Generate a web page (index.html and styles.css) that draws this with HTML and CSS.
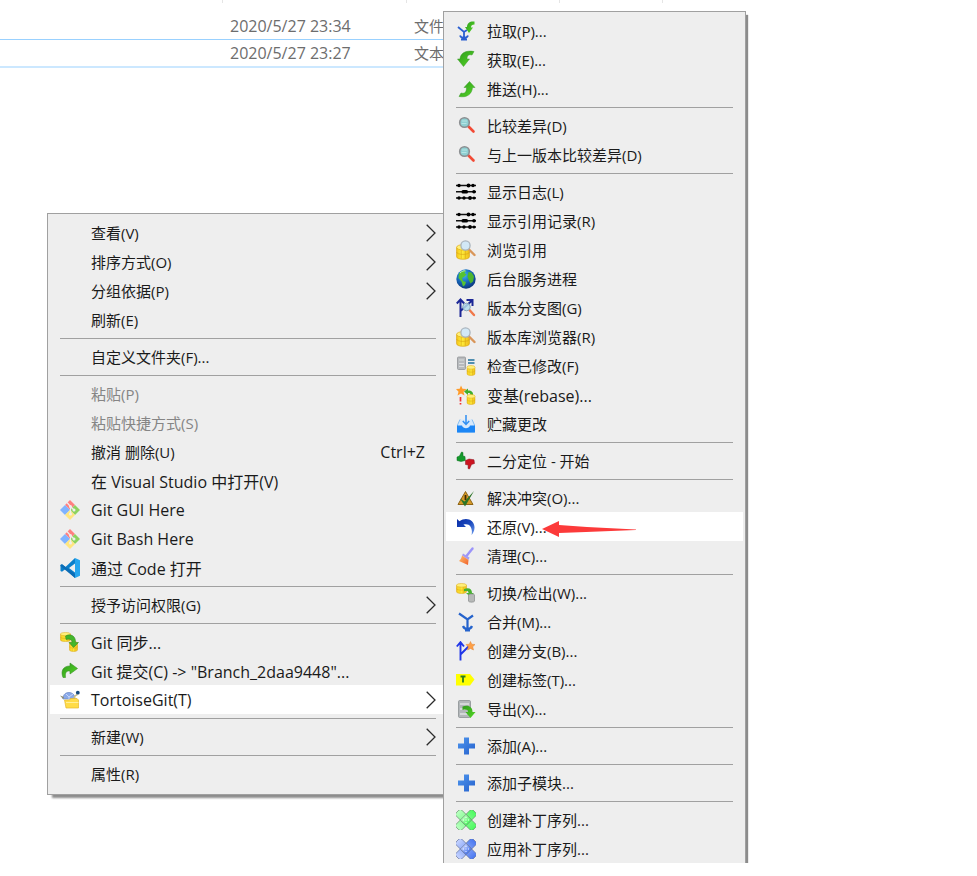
FILE: index.html
```html
<!DOCTYPE html>
<html lang="zh-CN">
<head>
  <meta charset="UTF-8">
  <title>TortoiseGit</title>
  <link rel="stylesheet" href="styles.css">
</head>
<body>
  <!-- Icon set -->
  <svg class="defs" aria-hidden="true">
    <defs>
      <linearGradient id="green" x1="0" y1="0" x2="1" y2="1">
        <stop offset="0" stop-color="#2f9a1c"/><stop offset="1" stop-color="#55d826"/>
      </linearGradient>
      <linearGradient id="gold" x1="0" y1="0" x2="1" y2="0">
        <stop offset="0" stop-color="#f5c518"/><stop offset=".4" stop-color="#ffee3c"/><stop offset="1" stop-color="#eebc1a"/>
      </linearGradient>
      <radialGradient id="sea" cx=".4" cy=".3" r=".8">
        <stop offset="0" stop-color="#3fb8f2"/><stop offset=".5" stop-color="#1565b8"/><stop offset="1" stop-color="#0a2a6c"/>
      </radialGradient>
      <linearGradient id="plusBlue" x1="0" y1="0" x2="1" y2="1">
        <stop offset="0" stop-color="#4f97ee"/><stop offset="1" stop-color="#2560cc"/>
      </linearGradient>
      <linearGradient id="patchGreen" x1="0" y1="0" x2="1" y2="0">
        <stop offset="0" stop-color="#b9ffc0"/><stop offset="1" stop-color="#4dfa60"/>
      </linearGradient>
      <linearGradient id="patchBlue" x1="0" y1="0" x2="1" y2="0">
        <stop offset="0" stop-color="#c4d2ff"/><stop offset="1" stop-color="#4a78f0"/>
      </linearGradient>
      <linearGradient id="undo" x1="0" y1="0" x2="1" y2="1">
        <stop offset="0" stop-color="#0a2ea8"/><stop offset=".5" stop-color="#1a48bc"/><stop offset="1" stop-color="#6f9ff0"/>
      </linearGradient>
      <linearGradient id="broom" x1="0" y1="0" x2="1" y2="1">
        <stop offset="0" stop-color="#ffc06a"/><stop offset="1" stop-color="#f0602c"/>
      </linearGradient>

      <symbol id="db" viewBox="0 0 12 12" preserveAspectRatio="none">
        <path d="M.5 2.500v7c0 2.600 11 2.600 11 0v-7z" fill="url(#gold)" stroke="#dba91f" stroke-width=".6"/>
        <ellipse cx="6" cy="2.500" rx="5.500" ry="2" fill="#fff07a" stroke="#e0ae20" stroke-width=".6"/>
        <path d="M.5 6c0 2.400 11 2.400 11 0M4.500 4.500v6.500M8 4.500v6.500" fill="none" stroke="#d9a514" stroke-width=".5"/>
      </symbol>
      <symbol id="pull" viewBox="0 0 20 20">
        <path d="M2 6l6 5 3-2M8 11v7M4 14.500c1 3 7 3 8 0M5 18.500h6" fill="none" stroke="#2a5fd0" stroke-width="1.800"/>
        <path d="M9 6h2c0-4 3-6 7.500-5.500v3C16 3.500 15 4.500 15 6.500h2L13 12z" fill="url(#green)"/>
      </symbol>
      <symbol id="fetch" viewBox="0 0 20 20">
        <path d="M1.500 9H4C4.500 3 10 0 18 1.500L16 5c-4-1-5 1-5 4h2.500L7.500 16.500z" fill="url(#green)" stroke="#3d9a2a" stroke-width=".5"/>
      </symbol>
      <symbol id="push" viewBox="0 0 20 20">
        <path d="M13.500 2.500l5.500 6h-2.500C16 15 11 19 3 17.500l2-3.500c4 1 5.500-1 5.500-5.500H8z" fill="url(#green)" stroke="#3d9a2a" stroke-width=".5"/>
      </symbol>
      <symbol id="diff" viewBox="0 0 20 20">
        <path d="M12.500 10.500l5 5" stroke="#f24a35" stroke-width="2.600" stroke-linecap="round"/>
        <circle cx="8.500" cy="6.500" r="4.800" fill="#8fd0d2" stroke="#8c8f92" stroke-width="1.600"/>
        <path d="M6 5h5M5.500 7.500h5" stroke="#b7e4e4"/>
      </symbol>
      <symbol id="log" viewBox="0 0 20 20">
        <path d="M0 3.500h20M0 9.800h20M0 16h20" stroke="#111" stroke-width="1.400"/>
        <g fill="#000">
          <circle cx="3" cy="3.500" r="1.700"/><circle cx="12.500" cy="3.500" r="1.900"/><circle cx="17" cy="3.500" r="1.700"/>
          <rect x="5.500" y="8" width="6.500" height="3.600" rx="1.500"/><circle cx="18" cy="9.800" r="1.800"/>
          <circle cx="3" cy="16" r="1.700"/><circle cx="8" cy="16" r="1.700"/><circle cx="14" cy="16" r="1.900"/><circle cx="18" cy="16" r="1.500"/>
        </g>
      </symbol>
      <symbol id="browse" viewBox="0 0 20 20">
        <use href="#db" x="0" y="4" width="14" height="16"/>
        <path d="M13 9.500l5.500 5.500" stroke="#d9965a" stroke-width="2.400" stroke-linecap="round"/>
        <circle cx="9.500" cy="5.500" r="4.600" fill="#d2e8f6" stroke="#a9b4bd" stroke-width="1.300"/>
      </symbol>
      <symbol id="globe" viewBox="0 0 20 20">
        <circle cx="10" cy="10" r="9.700" fill="url(#sea)"/>
        <path d="M3 4.500C5 2 8 1 10 1.500L8.500 4l2 1.500L8 8l-2 1 1 3 3 1-1 3-2 1.500-1.500-5L2.500 9z" fill="#56c232"/>
        <path d="M12.500 3l3 .5 2.500 4-1 5-2.500 2-2-4-1-3z" fill="#4db52c"/>
        <path d="M4 4c2-2 4-2.500 5.500-2" stroke="#b9ecc0" fill="none"/>
      </symbol>
      <symbol id="graph" viewBox="0 0 20 20">
        <path d="M4.500 19V2M.8 5.500l3.700-4 3.700 4M4.500 13l11-10M10.500 2h6v6" fill="none" stroke="#1c2796" stroke-width="2"/>
        <path d="M13.500 12l4.500 5" stroke="#f0784a" stroke-width="2.400" stroke-linecap="round"/>
        <circle cx="10.500" cy="9" r="3.800" fill="#b4dcec" fill-opacity=".85" stroke="#88a4b8"/>
      </symbol>
      <symbol id="check" viewBox="0 0 20 20">
        <rect x="1.500" y="1" width="8" height="12.500" rx="1" fill="#b7babd" stroke="#909396" stroke-width=".8"/>
        <path d="M3 4h5M3 7.500h5M3 10.500h5" stroke="#d9dbdc" stroke-width="1.200"/>
        <path d="M12 4h6.500M12 7h6.500" stroke="#1d6f9c" stroke-width="1.700"/>
        <use href="#db" x="10.500" y="9" width="9" height="11"/>
      </symbol>
      <symbol id="rebase" viewBox="0 0 20 20">
        <path d="M5 .5l1.500 3.200 4 .3-3 2.700 1 3.800L5 8.600l-3.500 2 1-3.900L0 4l3.700-.3z" fill="#ff9c2a"/>
        <path d="M8 6.500l4-3v2c4 0 5.500 2 5 5h-2.500c0-2-.5-2.500-2.500-2.500v2z" fill="#3fae2a"/>
        <path d="M4.500 12v4.500M4.500 18v1.500" stroke="#f03030" stroke-width="1.700"/>
        <use href="#db" x="10.500" y="9" width="9" height="11"/>
      </symbol>
      <symbol id="stash" viewBox="0 0 20 20">
        <path d="M4 5.500L1.500 11v7h17v-7L16 5.500" fill="#d7e9fb" stroke="#83bdf2" stroke-width="1"/>
        <path d="M1 11.500h5c1 3.500 7 3.500 8 0h5V18.500H1z" fill="#1c86f5"/>
        <path d="M10 1v9M6.800 7l3.200 3.500L13.200 7" fill="none" stroke="#2f8ff2" stroke-width="1.500"/>
      </symbol>
      <symbol id="bisect" viewBox="0 0 20 20">
        <path d="M1 6l2.500-1L5.500 1l1.500.5V5l2 .5.300 4-4.300 1L1 9.500z" fill="#149a2c" stroke="#0b6b1a" stroke-width=".5"/>
        <path d="M9.500 9.500L13 8l5 .8.5 3.700-3 1-2 4.500-1.500-.5.200-3.500-2.700-.5z" fill="#cc1420" stroke="#86101a" stroke-width=".5"/>
      </symbol>
      <symbol id="resolve" viewBox="0 0 20 20">
        <path d="M9.500 3.500L17 16.500H2z" fill="#d79a27" stroke="#8d6415" stroke-linejoin="round"/>
        <path d="M9.500 7v5" stroke="#3b2c06" stroke-width="1.800"/>
        <path d="M4 10.500l4.500 3L18 3 9 18.500z" fill="#2c7426"/>
      </symbol>
      <symbol id="revert" viewBox="0 0 20 20">
        <path d="M1 2l2.500 2.300C10-1 19 3 18.500 11c-.2 3-1.500 5.500-3 7C17 12 14.500 5.500 7.500 7.500L10 10H1z" fill="url(#undo)"/>
      </symbol>
      <symbol id="clean" viewBox="0 0 20 20">
        <path d="M16.500 2.500L10.500 10" stroke="#9b94fa" stroke-width="2.400" stroke-linecap="round"/>
        <path d="M7 7.500l6.500 4-1 2.500L6 9.500z" fill="#a49cf4"/>
        <path d="M6 9.500l6.500 4.500-.5 5L3 15c2-1.500 2.500-3.500 3-5.500z" fill="url(#broom)"/>
      </symbol>
      <symbol id="switch" viewBox="0 0 20 20">
        <use href="#db" x="0" y="0" width="11" height="11"/>
        <path d="M8 6c5-2 8 0 8 4h2l-4 3.500L10 10h2.500c0-2-1.500-2.500-4.500-1.500z" fill="#46b32e"/>
        <path d="M12.500 12v6c0 1.500 6 1.500 6 0v-6c0-1.400-6-1.400-6 0z" fill="#b7b9b8" stroke="#87898a" stroke-width=".7"/>
      </symbol>
      <symbol id="merge" viewBox="0 0 20 20">
        <path d="M3 1.500l8.500 6L17 3.500M11.500 7v11M7 14c1.500 4 7.500 4 9 0M9 18.500h5" fill="none" stroke="#2563cc" stroke-width="2.200"/>
      </symbol>
      <symbol id="branch" viewBox="0 0 20 20">
        <path d="M4.500 19.500V1.500M.8 5.500l3.700-4.300L8 5.500M4.500 13.500L13 5" fill="none" stroke="#1f35e8" stroke-width="1.900"/>
        <path d="M14.500 .5l1.200 2.700 3.300.3-2.300 2.300.8 3.200-3-1.500-3 1.500.8-3.200L10 3.500l3.300-.3z" fill="#ff9f45" stroke="#df8436" stroke-width=".5"/>
      </symbol>
      <symbol id="tag" viewBox="0 0 20 20">
        <path d="M0 4h14l4.500 5.500L14 15.500H0z" fill="#ffff00"/>
        <path d="M4.500 6.500h5M7 6.500v6" stroke="#2a7d22" stroke-width="1.800"/>
      </symbol>
      <symbol id="export" viewBox="0 0 20 20">
        <rect x="2.500" y="1.500" width="12" height="17" rx="1.200" fill="#b3b7ba" stroke="#8a9093" stroke-width=".8"/>
        <path d="M4 5h9M4 10h5M4 15h7" stroke="#dfe2e3" stroke-width="1.400"/>
        <path d="M6.500 7.500c6-2 10 .5 10 5.500h3l-5 6-5-6H12c0-2.500-2-3-5.500-2z" fill="url(#green)"/>
      </symbol>
      <symbol id="add" viewBox="0 0 20 20">
        <path d="M8 1.500h5V7.500h6v5h-6v6H8v-6H2v-5h6z" fill="url(#plusBlue)"/>
      </symbol>
      <symbol id="patch-create" viewBox="0 0 20 20">
        <g fill="url(#patchGreen)" stroke="#6a8f70" stroke-width=".7">
          <rect x="-2" y="6" width="24" height="8" rx="2" transform="rotate(-45 10 10)"/>
          <rect x="-2" y="6" width="24" height="8" rx="2" transform="rotate(45 10 10)"/>
          <rect x="6" y="6" width="8" height="8" transform="rotate(45 10 10)"/>
        </g>
        <path d="M10 7v1M7 10h1M12 10h1M10 12v1M9.500 10h1" stroke="#f4fff4"/>
      </symbol>
      <symbol id="patch-apply" viewBox="0 0 20 20">
        <g fill="url(#patchBlue)" stroke="#65749c" stroke-width=".7">
          <rect x="-2" y="6" width="24" height="8" rx="2" transform="rotate(-45 10 10)"/>
          <rect x="-2" y="6" width="24" height="8" rx="2" transform="rotate(45 10 10)"/>
          <rect x="6" y="6" width="8" height="8" transform="rotate(45 10 10)"/>
        </g>
        <path d="M10 7v1M7 10h1M12 10h1M10 12v1M9.500 10h1" stroke="#f4f7ff"/>
      </symbol>
      <symbol id="git" viewBox="0 0 20 20">
        <path d="M10 0l5 5-5 5-5-5z" fill="#ff8080"/>
        <path d="M5 5l5 5-5 5-5-5z" fill="#80b3ff"/>
        <path d="M15 5l5 5-5 5-5-5z" fill="#8dd35f"/>
        <path d="M10 10l5 5-5 5-5-5z" fill="#ffe680"/>
        <path d="M7 2.500l3.500 4v8M10.500 6.500L14 10" stroke="#eee" stroke-width="1.200" fill="none"/>
        <circle cx="10.500" cy="6.500" r="1.500" fill="#eee"/><circle cx="14" cy="10" r="1.500" fill="#eee"/><circle cx="10.500" cy="14" r="1.500" fill="#eee"/>
      </symbol>
      <symbol id="vscode" viewBox="0 0 20 20">
        <path d="M15 0L5.500 9 2 6.200.500 7v6l1.500.8L5.500 11l9.500 9V14.500L9 10l6-4.500z" fill="#0a7fcb"/>
        <path d="M.5 7L2 6.200 15 16v4L.5 8z" fill="#0b6cb5"/>
        <path d="M15 0l5 2.200v15.600L15 20z" fill="#25a5ee"/>
      </symbol>
      <symbol id="sync" viewBox="0 0 20 20">
        <use href="#db" x="0" y="0" width="11" height="10"/>
        <use href="#db" x="9" y="9" width="9" height="11"/>
        <path d="M5.500 4c5-3 10.500 0 10 6.500h3l-5 5-4.500-5h3c0-3-2-4-6-3z" fill="#43b62a" stroke="#2f7f1c" stroke-width=".5"/>
      </symbol>
      <symbol id="commit" viewBox="0 0 20 20">
        <path d="M10 2l7.500 5.500L10 13V10C6 9.500 5 12 5.500 16.500H3C.5 10 3 5 10 5z" fill="url(#green)" stroke="#3a8f28" stroke-width=".6"/>
      </symbol>
      <symbol id="tortoise" viewBox="0 0 20 20">
        <path d="M3 9C3 4 6 2.500 9 2.500S15 4.500 15 9z" fill="#8aa9e8" stroke="#6886c4" stroke-width=".7"/>
        <path d="M6 4l3 3 4-3M9 7v3" stroke="#c4d5fa" fill="none"/>
        <path d="M0 5.500l4 1.500-1 2z" fill="#8f8a6a"/>
        <path d="M14 8c.5-2 1.500-3 3.500-3.500" stroke="#cbbf83" stroke-width="1.500" fill="none"/>
        <circle cx="17.800" cy="2.700" r="1.900" fill="#164a7a"/>
        <path d="M4.500 10h5l1-1.500H17l1.500 1.500V18H6z" fill="#ffdc48" stroke="#e5b82f" stroke-width=".7"/>
        <path d="M6 12.500h12.500" stroke="#ffef9b"/>
      </symbol>
      <symbol id="chevron" viewBox="0 0 10 18">
        <path d="M.7.700L9 9 .7 17.300" fill="none" stroke="#2b2b2b" stroke-width="1.300"/>
      </symbol>
    </defs>
  </svg>

  <!-- File list behind the menus -->
  <table class="files">
    <colgroup><col class="col-name"><col class="col-date"><col class="col-type"><col class="col-size"></colgroup>
    <thead>
      <tr><th></th><th></th><th></th><th></th></tr>
    </thead>
    <tbody>
      <tr><td></td><td class="latin">2020/5/27 23:34</td><td>文件</td><td></td></tr>
      <tr class="selected"><td></td><td class="latin">2020/5/27 23:27</td><td>文本</td><td></td></tr>
    </tbody>
  </table>

  <!-- Explorer context menu -->
  <nav class="menu context">
    <button class="item"><span class="icon"></span>查看(V)<svg class="arrow"><use href="#chevron"/></svg></button>
    <button class="item"><span class="icon"></span>排序方式(O)<svg class="arrow"><use href="#chevron"/></svg></button>
    <button class="item"><span class="icon"></span>分组依据(P)<svg class="arrow"><use href="#chevron"/></svg></button>
    <button class="item"><span class="icon"></span>刷新(E)</button>
    <hr>
    <button class="item"><span class="icon"></span>自定义文件夹(F)...</button>
    <hr>
    <button class="item" disabled><span class="icon"></span>粘贴(P)</button>
    <button class="item" disabled><span class="icon"></span>粘贴快捷方式(S)</button>
    <button class="item"><span class="icon"></span>撤消 删除(U)<span class="shortcut latin">Ctrl+Z</span></button>
    <button class="item latin"><span class="icon"></span>在 Visual Studio 中打开(V)</button>
    <button class="item latin"><svg class="icon"><use href="#git"/></svg>Git GUI Here</button>
    <button class="item latin"><svg class="icon"><use href="#git"/></svg>Git Bash Here</button>
    <button class="item latin"><svg class="icon"><use href="#vscode"/></svg>通过 Code 打开</button>
    <hr>
    <button class="item"><span class="icon"></span>授予访问权限(G)<svg class="arrow"><use href="#chevron"/></svg></button>
    <hr>
    <button class="item latin"><svg class="icon"><use href="#sync"/></svg>Git 同步...</button>
    <button class="item latin"><svg class="icon"><use href="#commit"/></svg>Git 提交(C) -&gt; "Branch_2daa9448"...</button>
    <button class="item latin active"><svg class="icon"><use href="#tortoise"/></svg>TortoiseGit(T)<svg class="arrow"><use href="#chevron"/></svg></button>
    <hr>
    <button class="item"><span class="icon"></span>新建(W)<svg class="arrow"><use href="#chevron"/></svg></button>
    <hr>
    <button class="item"><span class="icon"></span>属性(R)</button>
  </nav>

  <!-- TortoiseGit submenu -->
  <nav class="menu submenu">
    <button class="item"><svg class="icon"><use href="#pull"/></svg>拉取(P)...</button>
    <button class="item"><svg class="icon"><use href="#fetch"/></svg>获取(E)...</button>
    <button class="item"><svg class="icon"><use href="#push"/></svg>推送(H)...</button>
    <hr>
    <button class="item"><svg class="icon"><use href="#diff"/></svg>比较差异(D)</button>
    <button class="item"><svg class="icon"><use href="#diff"/></svg>与上一版本比较差异(D)</button>
    <hr>
    <button class="item"><svg class="icon"><use href="#log"/></svg>显示日志(L)</button>
    <button class="item"><svg class="icon"><use href="#log"/></svg>显示引用记录(R)</button>
    <button class="item"><svg class="icon"><use href="#browse"/></svg>浏览引用</button>
    <button class="item"><svg class="icon"><use href="#globe"/></svg>后台服务进程</button>
    <button class="item"><svg class="icon"><use href="#graph"/></svg>版本分支图(G)</button>
    <button class="item"><svg class="icon"><use href="#browse"/></svg>版本库浏览器(R)</button>
    <button class="item"><svg class="icon"><use href="#check"/></svg>检查已修改(F)</button>
    <button class="item latin"><svg class="icon"><use href="#rebase"/></svg>变基(rebase)...</button>
    <button class="item"><svg class="icon"><use href="#stash"/></svg>贮藏更改</button>
    <hr>
    <button class="item"><svg class="icon"><use href="#bisect"/></svg>二分定位 - 开始</button>
    <hr>
    <button class="item"><svg class="icon"><use href="#resolve"/></svg>解决冲突(O)...</button>
    <button class="item active"><svg class="icon"><use href="#revert"/></svg>还原(V)...<svg class="pointer" viewBox="0 0 94 18"><path d="M0 9L17 1v4l28 2 49 2.500v.5L44 12l-27 1v4z" fill="#fc3a3a"/></svg></button>
    <button class="item"><svg class="icon"><use href="#clean"/></svg>清理(C)...</button>
    <hr>
    <button class="item"><svg class="icon"><use href="#switch"/></svg>切换/检出(W)...</button>
    <button class="item"><svg class="icon"><use href="#merge"/></svg>合并(M)...</button>
    <button class="item"><svg class="icon"><use href="#branch"/></svg>创建分支(B)...</button>
    <button class="item"><svg class="icon"><use href="#tag"/></svg>创建标签(T)...</button>
    <button class="item"><svg class="icon"><use href="#export"/></svg>导出(X)...</button>
    <hr>
    <button class="item"><svg class="icon"><use href="#add"/></svg>添加(A)...</button>
    <hr>
    <button class="item"><svg class="icon"><use href="#add"/></svg>添加子模块...</button>
    <hr>
    <button class="item"><svg class="icon"><use href="#patch-create"/></svg>创建补丁序列...</button>
    <button class="item"><svg class="icon"><use href="#patch-apply"/></svg>应用补丁序列...</button>
  </nav>
</body>
</html>
```
FILE: styles.css
```css
body {
  margin: 0;
  background: #fff;
  font-family: "Open Sans", "Noto Sans CJK SC", sans-serif;
  font-size: 15px;
  color: #1a1a1a;
}
.defs {
  position: absolute;
  width: 0;
  height: 0;
}

/* file list */
.files {
  table-layout: fixed;
  width: 663px;
  border-collapse: separate;
  border-spacing: 0;
  color: #6d6d6d;
}
.col-name {
  width: 223px;
}
.col-date {
  width: 184px;
}
.col-type {
  width: 153px;
}
.files th {
  height: 3px;
  padding: 0;
  border-right: 1px solid #e5e5e5;
}
.files td {
  height: 26px;
  padding: 0 7px;
  line-height: 26px;
  white-space: nowrap;
  border-bottom: 1px solid #99d1ff;
}
.files tbody::before {
  content: "";
  display: block;
  height: 10px;
}
.files .selected td {
  border-bottom: 2px solid #cce8ff;
}

/* menus */
.menu {
  position: absolute;
  box-sizing: border-box;
  padding: 4px 2px 6px;
  background: #eee;
  border: 1px solid #a0a0a0;
}
.context {
  top: 213px;
  left: 47px;
  width: 402px;
  box-shadow: 4px 4px 2px -1px #8c8c8c;
}
.submenu {
  top: 11px;
  left: 443px;
  width: 303px;
  padding-bottom: 0;
  border-bottom: none;
  box-shadow: 3px 3px 1px -1px #8c8c8c;
  clip-path: inset(0 -6px 0 0);
}
.item {
  position: relative;
  display: flex;
  align-items: center;
  width: 100%;
  height: 29px;
  padding: 0 10px;
  border: none;
  background: none;
  font: inherit;
  color: inherit;
  text-align: left;
  white-space: pre;
}
.item:hover,
.item.active {
  background: #fff;
}
.item:disabled {
  color: #858585;
}
.latin,
.item.latin {
  font-size: 16px;
}
.icon {
  flex: none;
  width: 20px;
  height: 20px;
  margin-right: 11px;
}
.arrow {
  width: 10px;
  height: 18px;
  margin-left: auto;
}
.shortcut {
  margin-left: auto;
  margin-right: 11px;
}
.menu hr {
  height: 1px;
  margin: 4px 10px 3px;
  border: none;
  background: #a0a0a0;
}

/* red arrow pointing at the revert command */
.pointer {
  position: absolute;
  top: 8px;
  left: 96px;
  width: 94px;
  height: 18px;
}
```
